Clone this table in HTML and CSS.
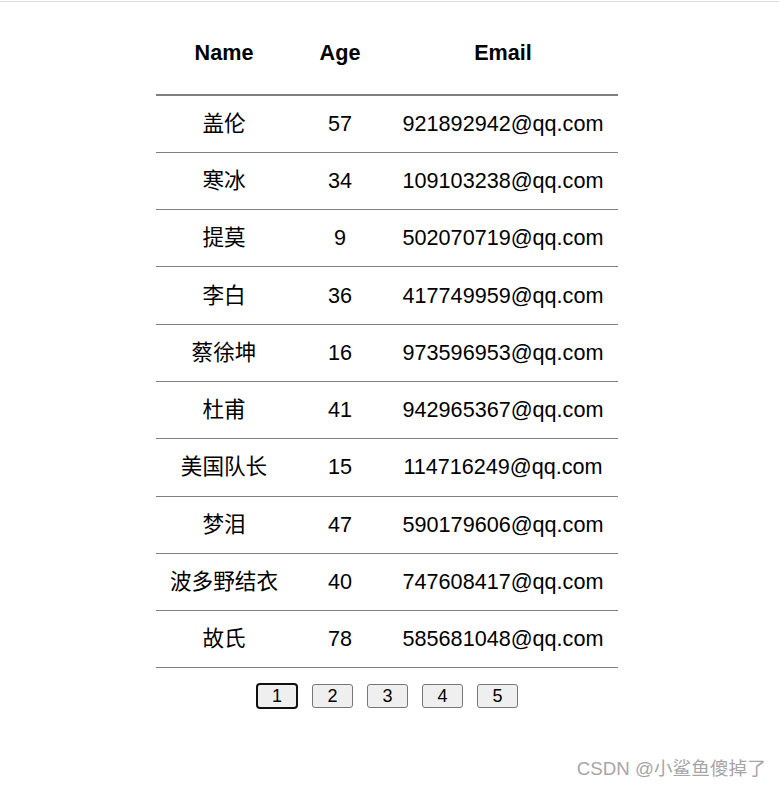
FILE: index.html
```html
<!DOCTYPE html>
<html lang="zh-CN">
<head>
    <meta charset="UTF-8">
    <meta name="viewport" content="width=device-width, initial-scale=1.0">
    <title>用户列表</title>
    <link rel="stylesheet" href="styles.css">
</head>
<body>
    <div class="page">
        <table class="user-table">
            <thead>
                <tr>
                    <th class="col-name">Name</th>
                    <th class="col-age">Age</th>
                    <th class="col-email">Email</th>
                </tr>
            </thead>
            <tbody>
                <tr><td>盖伦</td><td>57</td><td>921892942@qq.com</td></tr>
                <tr><td>寒冰</td><td>34</td><td>109103238@qq.com</td></tr>
                <tr><td>提莫</td><td>9</td><td>502070719@qq.com</td></tr>
                <tr><td>李白</td><td>36</td><td>417749959@qq.com</td></tr>
                <tr><td>蔡徐坤</td><td>16</td><td>973596953@qq.com</td></tr>
                <tr><td>杜甫</td><td>41</td><td>942965367@qq.com</td></tr>
                <tr><td>美国队长</td><td>15</td><td>114716249@qq.com</td></tr>
                <tr><td>梦泪</td><td>47</td><td>590179606@qq.com</td></tr>
                <tr><td>波多野结衣</td><td>40</td><td>747608417@qq.com</td></tr>
                <tr><td>故氏</td><td>78</td><td>585681048@qq.com</td></tr>
            </tbody>
        </table>

        <div class="pager">
            <button type="button" class="pager-btn is-active">1</button>
            <button type="button" class="pager-btn">2</button>
            <button type="button" class="pager-btn">3</button>
            <button type="button" class="pager-btn">4</button>
            <button type="button" class="pager-btn">5</button>
        </div>
    </div>

    <div class="watermark">CSDN @小鲨鱼傻掉了</div>
</body>
</html>
```

FILE: styles.css
```css
* { box-sizing: border-box; margin: 0; padding: 0; }
html, body { height: 100%; }
body {
    font-family: 'Liberation Sans', Arial, 'Noto Sans CJK SC', sans-serif;
    background-color: #FFFFFF;
    color: #000000;
    border-top: 1px solid #FFFFFF;
    position: relative;
}
body::before {
    content: ""; display: block; height: 1px; background-color: #DDDDDD;
}
.page { padding: 12px 5px 0 0; }
.user-table {
    margin: 0 auto; border-collapse: collapse; font-size: 21.6px; text-align: center;
}
.user-table th {
    height: 81px; padding: 0 0 4px; font-weight: 700; line-height: 25px;
    border-bottom: 2px solid #808080; vertical-align: middle;
}
.user-table td {
    height: 57.3px; padding: 0; line-height: 26px;
    border-bottom: 1px solid #808080; vertical-align: middle;
}
.col-name { width: 136px; }
.col-age { width: 96px; }
.col-email { width: 230px; }
.pager { display: flex; justify-content: center; gap: 14px; margin-top: 16px; }
.pager-btn {
    width: 41px; height: 24px; padding: 0; font-family: 'Liberation Sans', Arial, sans-serif;
    font-size: 18px; line-height: 20px; color: #000000; background-color: #EFEFEF;
    border: 1px solid #767676; border-radius: 3px; cursor: pointer;
}
.pager-btn.is-active {
    width: 42px; height: 26px; margin-top: -1px;
    border: 2px solid #101010; border-radius: 4px;
}
.watermark {
    position: absolute; right: 13px; top: 756px;
    font-family: 'Liberation Sans', Arial, 'Noto Sans CJK SC', sans-serif;
    font-size: 18.7px; line-height: 24px; color: #A6A6A6;
    text-shadow: 0 0 1px #FFFFFF;
}
```
